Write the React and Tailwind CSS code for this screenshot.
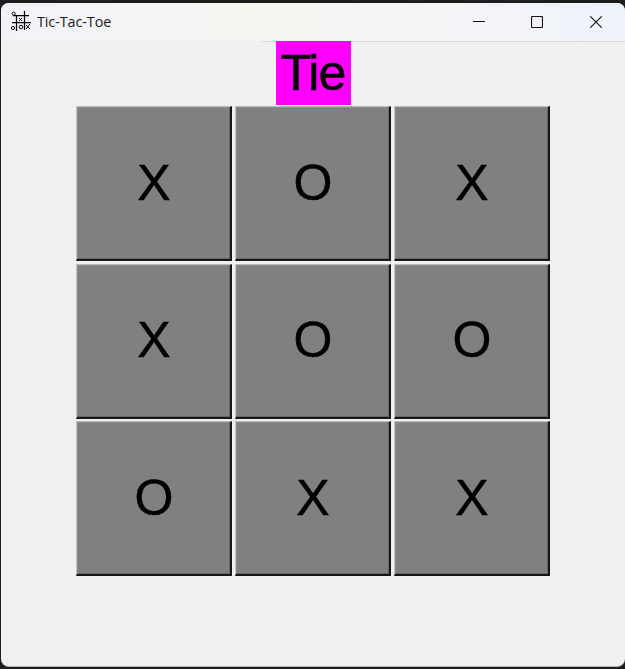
const rows = [
  ['X', 'O', 'X'],
  ['X', 'O', 'O'],
  ['O', 'X', 'X'],
];

function BoardIcon() {
  return (
    <svg className="mt-2 self-start" width="22" height="22" viewBox="0 0 22 22" fill="none" stroke="#080808" strokeWidth="1">
      <path d="M5.500 4v16M13.500 0v19M2 4.500h16M1 11.500h19" strokeWidth="1.250" />
      <path d="M8 7l3 3M11 7l-3 3M15 14l4 4M19 13l-4 5" strokeWidth="1" />
      <circle cx="2.700" cy="2.700" r="1.600" />
      <circle cx="2" cy="17" r="1.600" />
      <circle cx="10" cy="16" r="1.800" />
    </svg>
  );
}

function TitleBar() {
  return (
    <header className="flex h-[38px] shrink-0 items-center bg-linear-to-r from-[#f1f3f9] via-[#f5f4ef] via-40% to-[#eff3fb] pl-2.5">
      <BoardIcon />
      <h1 className="ml-1 w-[90px] origin-left scale-x-[.96] whitespace-nowrap pb-px font-['Open_Sans','Noto_Sans',sans-serif] text-[15px] tracking-[-0.1px] text-[#202020]">Tic-Tac-Toe</h1>
      <div className="ml-auto flex text-[#181818]">
        <button className="flex h-[38px] w-[58px] items-center justify-center" aria-label="Minimize">
          <svg width="12" height="12" stroke="currentColor"><path d="M0 5.500h12" /></svg>
        </button>
        <button className="flex h-[38px] w-[58px] items-center justify-center" aria-label="Maximize">
          <svg width="12" height="12" fill="none" stroke="currentColor"><rect x=".5" y=".5" width="11" height="11" rx="1" strokeWidth="1.200" /></svg>
        </button>
        <button className="flex h-[38px] w-[59px] items-center justify-center" aria-label="Close">
          <svg width="12" height="12" stroke="currentColor" strokeWidth="1.150"><path d="M.3.300l11.400 11.400M11.700.300L.300 11.700" /></svg>
        </button>
      </div>
    </header>
  );
}

function Cell({ mark }) {
  return (
    <button className="h-[155px] border-t border-r-2 border-b-2 border-l border-t-[#b8bab9] border-r-[#161616] border-b-[#161616] border-l-[#c2c4c3] bg-[#808080] pb-px pl-px text-[50px] leading-none shadow-[inset_-1px_-1px_0_#686868,inset_1px_1px_0_#8c8c8c] [-webkit-text-stroke:0.5px_black]">
      {mark}
    </button>
  );
}

export default function App() {
  return (
    <div className="h-[669px] w-[625px] overflow-hidden bg-[#1e1d1e] pt-[3px] pl-px font-['Liberation_Sans',Arial,sans-serif] text-black">
      <main className="flex h-[664px] w-[624px] flex-col overflow-hidden rounded-lg border-b border-[#b5b5b5] bg-[#f0f0f0]">
        <TitleBar />
        <div className="-mb-px ml-[260px] h-px shrink-0 bg-[#dcdcdc]" />
        <div className="z-10 ml-[275px] flex h-16 w-[75px] shrink-0 items-center justify-center bg-[#ff00ff] pr-px text-[50px] leading-none tracking-[-1px] [-webkit-text-stroke:0.5px_black]">Tie</div>
        <div className="mt-px ml-[75px] grid grid-cols-[156px_156px_156px] gap-x-[3px] gap-y-[2.500px]">
          {rows.flat().map((mark, index) => <Cell key={index} mark={mark} />)}
        </div>
      </main>
    </div>
  );
}
